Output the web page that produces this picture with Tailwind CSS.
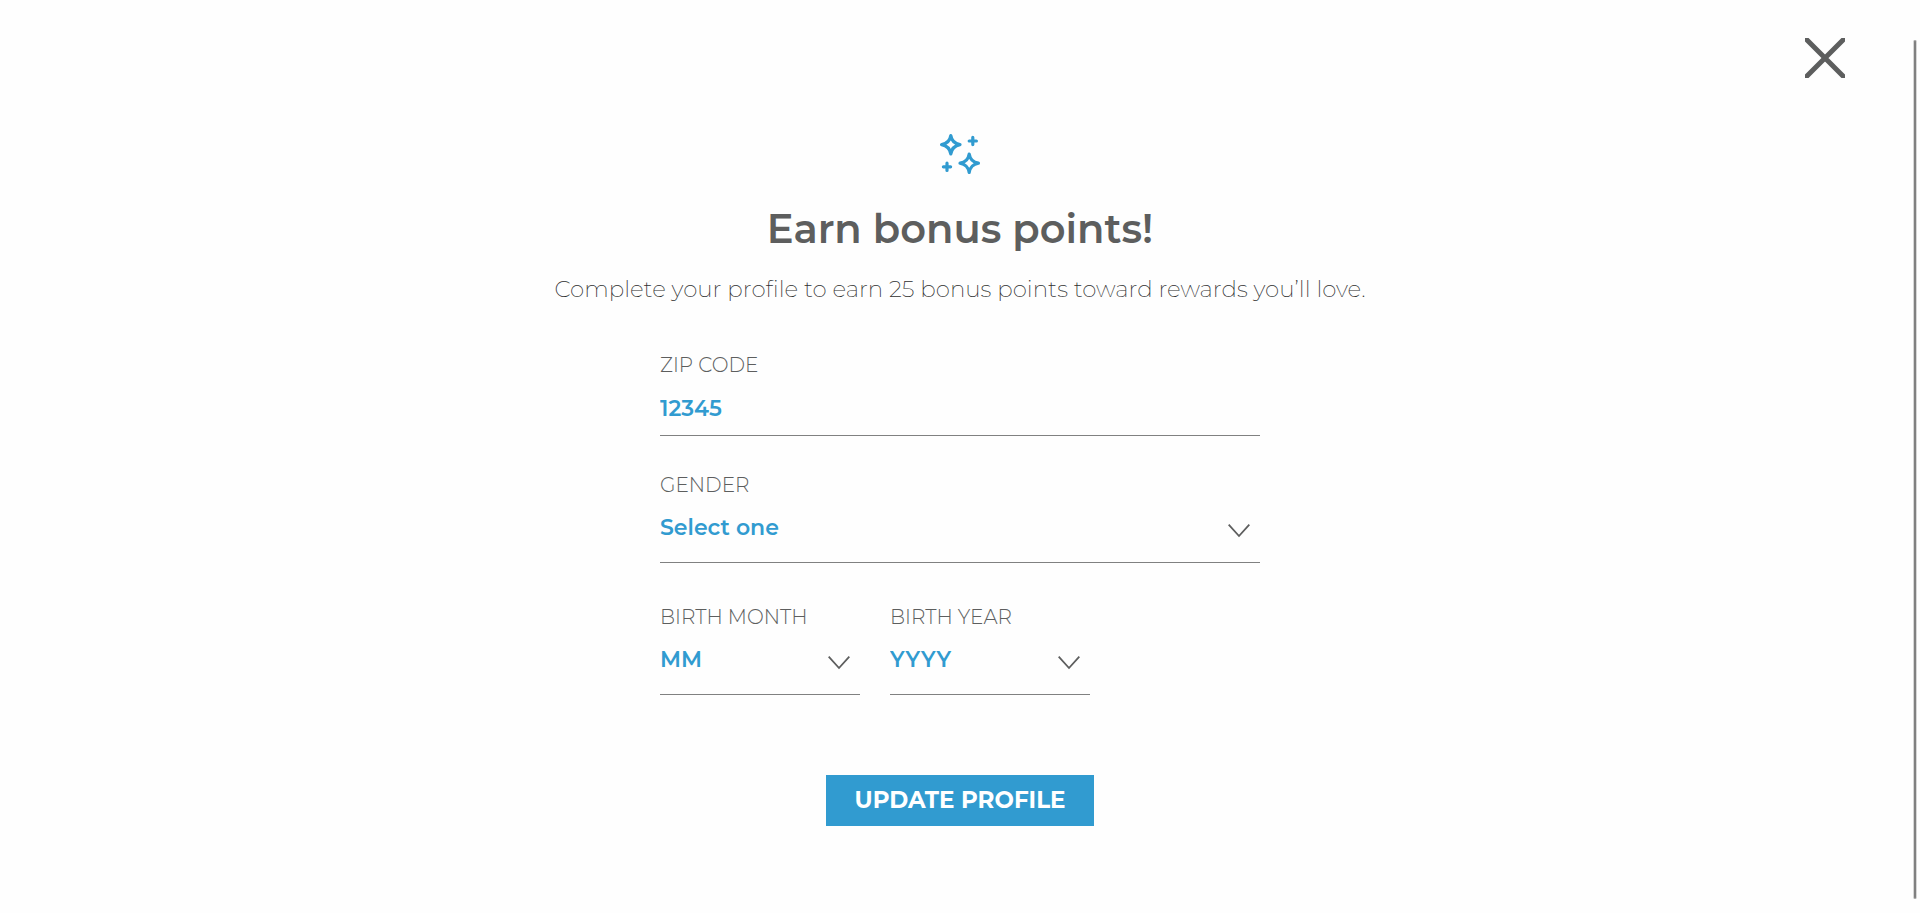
<!DOCTYPE html>
<html lang="en">
<head>
<meta charset="utf-8">
<meta name="viewport" content="width=device-width, initial-scale=1">
<title>Earn bonus points!</title>
<script src="https://cdn.jsdelivr.net/npm/@tailwindcss/browser@4"></script>
</head>
<body class="min-h-screen bg-[#fefefe] font-[Montserrat,Inter,sans-serif] text-[#5d5e5e]">
<button type="button" aria-label="Close" class="absolute top-[38px] right-[75px] size-10 cursor-pointer">
  <svg viewBox="0 0 40 40" class="size-10" fill="none" stroke="#5d5e5e" stroke-width="5" stroke-linecap="round"><path d="M1.6 1.6l36.8 36.8M38.4 1.6L1.6 38.4"/></svg>
</button>
<div aria-hidden="true" class="fixed top-10 right-[3px] bottom-[14px] w-1 rounded-full border-x border-[#d6d6d6] bg-[#808080]"></div>

<main class="flex flex-col items-center px-6 pt-[134px] pb-[87px]">
  <svg viewBox="0 0 40 40" class="size-10" fill="none" stroke="#319bd0" stroke-width="3.2" stroke-linecap="round" stroke-linejoin="round" aria-hidden="true">
    <path d="M10.8 1.6C11.6 7 14.6 9.8 20 10.6C14.6 11.6 11.6 14.6 10.8 20C10 14.6 7 11.6 1.6 10.6C7 9.8 10 7 10.8 1.6Z"/>
    <path d="M29.2 20C30 25.4 33 28.4 38.4 29.2C33 30.2 30 33 29.2 38.4C28.4 33 25.4 30.2 20 29.2C25.4 28.4 28.4 25.4 29.2 20Z"/>
    <path d="M32.8 3.4v7.2M29.2 7h7.2M7 29.2v7.2M3.4 32.8h7.2"/>
  </svg>
  <h1 class="mt-7 text-center text-[40px] leading-[54px] font-semibold">Earn bonus points!</h1>
  <p class="mt-[17px] text-center text-[23px] leading-[32px] font-extralight text-[#2e2f2f]">Complete your profile to earn 25 bonus points toward rewards you’ll love.</p>

  <form class="mt-12 flex w-full max-w-[600px] flex-col">
    <div class="flex flex-col">
      <label for="zip" class="text-[20px] leading-6 font-light">ZIP CODE</label>
      <input id="zip" type="text" placeholder="12345" class="h-[59px] w-full border-b border-[#808181] bg-transparent pt-1 text-[22px] font-semibold text-[#319bd0] outline-none placeholder:text-[#319bd0]">
    </div>
    <div class="mt-[37px] flex flex-col">
      <label for="gender" class="text-[20px] leading-6 font-light">GENDER</label>
      <div class="relative">
        <select id="gender" class="h-[66px] w-full appearance-none border-b border-[#808181] bg-transparent pb-1 text-[22px] font-semibold text-[#319bd0] outline-none"><option>Select one</option></select>
        <svg viewBox="0 0 22 14" class="pointer-events-none absolute top-[27px] right-[10px] h-[14px] w-[22px]" fill="none" stroke="#5d5e5e" stroke-width="1.8" aria-hidden="true"><path d="M.7 .7L11 12L21.3 .7"/></svg>
      </div>
    </div>
    <div class="mt-[42px] flex gap-[30px]">
      <div class="flex w-[200px] flex-col">
        <label for="month" class="text-[20px] leading-6 font-light">BIRTH MONTH</label>
        <div class="relative">
          <select id="month" class="h-[66px] w-full appearance-none border-b border-[#808181] bg-transparent pb-1 text-[22px] font-semibold text-[#319bd0] outline-none"><option>MM</option></select>
          <svg viewBox="0 0 22 14" class="pointer-events-none absolute top-[27px] right-[10px] h-[14px] w-[22px]" fill="none" stroke="#5d5e5e" stroke-width="1.8" aria-hidden="true"><path d="M.7 .7L11 12L21.3 .7"/></svg>
        </div>
      </div>
      <div class="flex w-[200px] flex-col">
        <label for="year" class="text-[20px] leading-6 font-light">BIRTH YEAR</label>
        <div class="relative">
          <select id="year" class="h-[66px] w-full appearance-none border-b border-[#808181] bg-transparent pb-1 text-[22px] font-semibold text-[#319bd0] outline-none"><option>YYYY</option></select>
          <svg viewBox="0 0 22 14" class="pointer-events-none absolute top-[27px] right-[10px] h-[14px] w-[22px]" fill="none" stroke="#5d5e5e" stroke-width="1.8" aria-hidden="true"><path d="M.7 .7L11 12L21.3 .7"/></svg>
        </div>
      </div>
    </div>
    <button type="submit" class="mt-20 flex h-[51px] w-[268px] cursor-pointer items-center justify-center self-center bg-[#319bd0] text-[23px] font-bold text-white">UPDATE PROFILE</button>
  </form>
</main>
</body>
</html>
